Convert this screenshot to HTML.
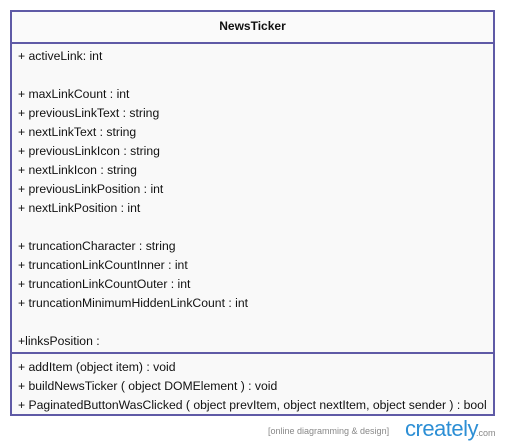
<html><head><style>
body{margin:0;width:505px;height:446px;background:#fff;font-family:"Liberation Sans",Arial,sans-serif;position:relative;overflow:hidden}
.box{position:absolute;left:10px;top:10px;width:481px;height:402px;border:2px solid #5f5aa6;background:#f9f9f9}
.h{position:absolute;left:0;right:0;top:0;height:30px;border-bottom:2px solid #5f5aa6;text-align:center;font-weight:bold;font-size:12px;line-height:28px;color:#111;background:#fafafa}
.t{position:absolute;left:6px;font-size:12.2px;color:#111;white-space:nowrap}
.d{position:absolute;left:0;right:0;top:340px;border-top:2px solid #5f5aa6}
.f{position:absolute;left:268px;top:426px;font-size:9px;color:#888}
.c{position:absolute;left:405px;top:416px;font-size:22px;color:#2d8fd5;letter-spacing:-0.5px}
.com{position:absolute;left:476px;top:428px;font-size:9px;color:#888}
</style></head><body>
<div class="box">
<div class="h">NewsTicker</div>
<div class="t" style="top:37px">+ activeLink: int</div>
<div class="t" style="top:75px">+ maxLinkCount : int</div>
<div class="t" style="top:94px">+ previousLinkText : string</div>
<div class="t" style="top:113px">+ nextLinkText : string</div>
<div class="t" style="top:132px">+ previousLinkIcon : string</div>
<div class="t" style="top:151px">+ nextLinkIcon : string</div>
<div class="t" style="top:170px">+ previousLinkPosition : int</div>
<div class="t" style="top:189px">+ nextLinkPosition : int</div>
<div class="t" style="top:227px">+ truncationCharacter : string</div>
<div class="t" style="top:246px">+ truncationLinkCountInner : int</div>
<div class="t" style="top:265px">+ truncationLinkCountOuter : int</div>
<div class="t" style="top:284px">+ truncationMinimumHiddenLinkCount : int</div>
<div class="t" style="top:322px">+linksPosition :</div>
<div class="d"></div>
<div class="t" style="top:348px">+ addItem (object item) : void</div>
<div class="t" style="top:367px">+ buildNewsTicker ( object DOMElement ) : void</div>
<div class="t" style="top:386px">+ PaginatedButtonWasClicked ( object prevItem, object nextItem, object sender ) : bool</div>
</div>
<div class="f">[online diagramming &amp; design]</div>
<div class="c">creately</div>
<div class="com">.com</div>
</body></html>
